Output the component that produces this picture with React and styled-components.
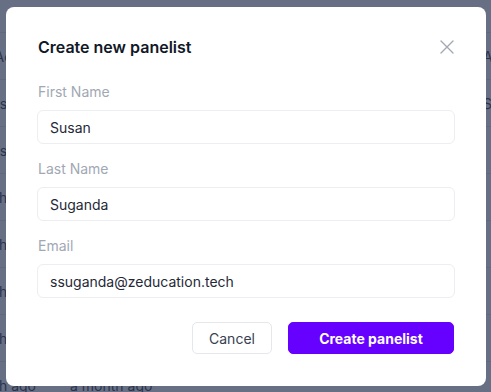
import { styled, createGlobalStyle } from "styled-components";

const GlobalStyle = createGlobalStyle`
  * { box-sizing: border-box; }
  html, body {
    margin: 0;
    padding: 0;
    background: #ffffff;
    font-family: Inter, "Noto Sans", sans-serif;
  }
`;

const rows = [
  ["Active", "Admin"],
  ["2 days ago", "Sunda"],
  ["2 weeks ago", ""],
  ["a month ago", ""],
  ["a month ago", ""],
  ["a month ago", ""],
  ["a month ago", ""],
  ["a month ago", "a month ago"],
];

function App() {
  return (
    <Page>
      <GlobalStyle />
      <Table>
        <HeadRow />
        {rows.map((r, i) => (
          <Row key={i}>
            <CutCell>{r[0]}</CutCell>
            <Cell>{i === rows.length - 1 ? r[1] : ""}</Cell>
            <Spacer />
            <EdgeCell>{i < 2 ? r[1] : ""}</EdgeCell>
          </Row>
        ))}
      </Table>
      <Overlay>
        <Modal>
          <Header>
            <Title>Create new panelist</Title>
            <Close aria-label="Close">
              <svg width="14" height="14" viewBox="0 0 14 14">
                <path
                  d="M1 1L13 13M13 1L1 13"
                  stroke="#a3a9b3"
                  strokeWidth="1.4"
                  strokeLinecap="round"
                />
              </svg>
            </Close>
          </Header>
          <Fields>
            <Field>
              <Label>First Name</Label>
              <Input defaultValue="Susan" />
            </Field>
            <Field>
              <Label>Last Name</Label>
              <Input defaultValue="Suganda" />
            </Field>
            <Field>
              <Label>Email</Label>
              <Input defaultValue="ssuganda@zeducation.tech" />
            </Field>
          </Fields>
          <Actions>
            <Button $w={80}>Cancel</Button>
            <Button $w={166} $primary>
              Create panelist
            </Button>
          </Actions>
        </Modal>
      </Overlay>
    </Page>
  );
}

const Page = styled.div`
  position: relative;
  width: 491px;
  height: 392px;
  overflow: hidden;
`;

const Table = styled.div`
  display: flex;
  flex-direction: column;
  color: #1f2937;
  font-size: 14px;
`;

const HeadRow = styled.div`
  height: 33px;
  border-bottom: 1px solid #e5e7eb;
`;

const Row = styled.div`
  display: flex;
  align-items: center;
  height: 47px;
  border-bottom: 1px solid #e5e7eb;
`;

const CutCell = styled.div`
  width: 36px;
  display: flex;
  justify-content: flex-end;
  overflow: hidden;
  white-space: nowrap;
  flex-shrink: 0;
`;

const Cell = styled.div`
  margin-left: 34px;
  white-space: nowrap;
`;

const Spacer = styled.div`
  flex: 1;
`;

const EdgeCell = styled.div`
  width: 8px;
  overflow: hidden;
  white-space: nowrap;
  flex-shrink: 0;
`;

const Overlay = styled.div`
  position: absolute;
  inset: 0;
  background: rgba(45, 55, 85, 0.72);
  padding: 7px 5px 0 6px;
`;

const Modal = styled.div`
  width: 480px;
  height: 379px;
  background: #ffffff;
  border-radius: 8px;
  padding: 28px 31px 32px;
  display: flex;
  flex-direction: column;
`;

const Header = styled.div`
  display: flex;
  align-items: center;
  justify-content: space-between;
  padding-left: 1px;
`;

const Title = styled.h2`
  margin: 0;
  font-size: 16px;
  line-height: 24px;
  font-weight: 600;
  color: #111827;
`;

const Close = styled.button`
  display: flex;
  border: 0;
  background: none;
  padding: 0;
  margin-right: 1px;
  cursor: pointer;
`;

const Fields = styled.div`
  display: flex;
  flex-direction: column;
  gap: 15px;
  margin-top: 23px;
`;

const Field = styled.label`
  display: flex;
  flex-direction: column;
  gap: 8px;
`;

const Label = styled.span`
  font-size: 14px;
  line-height: 20px;
  color: #a1a8b4;
  padding-left: 1px;
`;

const Input = styled.input`
  height: 34px;
  border: 1px solid #eceef1;
  border-radius: 6px;
  padding: 0 12px;
  font-family: Inter, "Noto Sans", sans-serif;
  font-size: 14px;
  color: #1f2937;
  outline: none;
`;

const Actions = styled.div`
  display: flex;
  justify-content: flex-end;
  gap: 16px;
  margin-top: 24px;
  padding-right: 1px;
`;

const Button = styled.button`
  height: 32px;
  width: ${(p) => p.$w}px;
  padding: 0;
  border-radius: 5px;
  border: 1px solid ${(p) => (p.$primary ? "#6600ff" : "#e5e7eb")};
  background: ${(p) => (p.$primary ? "#6600ff" : "#ffffff")};
  color: ${(p) => (p.$primary ? "#ffffff" : "#374151")};
  font-family: Inter, "Noto Sans", sans-serif;
  font-size: 14px;
  font-weight: ${(p) => (p.$primary ? 700 : 400)};
  cursor: pointer;
`;

export default App;
